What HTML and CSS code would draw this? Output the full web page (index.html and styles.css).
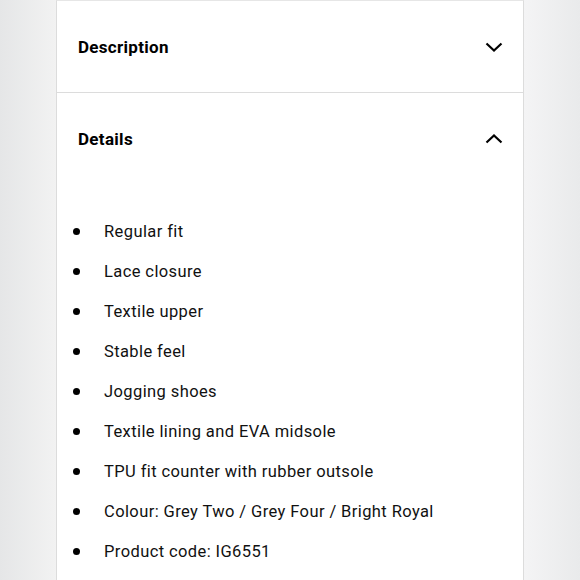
FILE: index.html
```html
<!DOCTYPE html>
<html lang="en">

<head>
    <meta charset="UTF-8">
    <meta name="viewport" content="width=device-width, initial-scale=1.0">
    <title>Product Details</title>
    <link rel="stylesheet" href="styles.css">
</head>

<body>
    <div class="page">
        <div class="side side-left"></div>

        <!-- Accordion panel -->
        <section class="panel">
            <div class="acc-item">
                <button class="acc-head">
                    <span>Description</span>
                    <svg class="chevron" width="18" height="10" viewBox="0 0 18 10">
                        <path d="M1.5 1.5 L9 8.5 L16.5 1.5" fill="none" stroke="#000" stroke-width="2.2" />
                    </svg>
                </button>
            </div>

            <div class="acc-item open">
                <button class="acc-head">
                    <span>Details</span>
                    <svg class="chevron" width="18" height="10" viewBox="0 0 18 10">
                        <path d="M1.5 8.5 L9 1.5 L16.5 8.5" fill="none" stroke="#000" stroke-width="2.2" />
                    </svg>
                </button>
                <ul class="details-list">
                    <li>Regular fit</li>
                    <li>Lace closure</li>
                    <li>Textile upper</li>
                    <li>Stable feel</li>
                    <li>Jogging shoes</li>
                    <li>Textile lining and EVA midsole</li>
                    <li>TPU fit counter with rubber outsole</li>
                    <li>Colour: Grey Two / Grey Four / Bright Royal</li>
                    <li>Product code: IG6551</li>
                </ul>
            </div>
        </section>

        <div class="side side-right"></div>
    </div>
</body>

</html>
```

FILE: styles.css
```css
/* Product details accordion */
body {
    margin: 0;
    font-family: Roboto, "Liberation Sans", sans-serif;
    color: #000;
    overflow: hidden;
}

.page {
    display: flex;
    height: 580px;
}

.side {
    flex: 1;
}

.side-left {
    background: linear-gradient(to right, #e5e6e7, #f2f2f2);
}

.side-right {
    background: linear-gradient(to right, #f4f4f5, #e9eaeb);
}

.panel {
    width: 466px;
    background: white;
    border-left: 1px solid #dcdcdc;
    border-right: 1px solid #dcdcdc;
    border-top: 1px solid #e6e6e6;
}

.acc-item {
    border-bottom: 1px solid #dcdcdc;
}

.acc-item.open {
    border-bottom: none;
}

.acc-head {
    display: flex;
    justify-content: space-between;
    align-items: center;
    width: 100%;
    height: 91px;
    padding: 0 20px 0 21px;
    border: none;
    background: none;
    font-family: inherit;
    font-size: 17px;
    font-weight: bold;
    letter-spacing: 0.3px;
    color: #000;
    text-align: left;
}

.acc-item.open .acc-head {
    height: 92px;
}

.details-list {
    list-style: none;
    margin: 0;
    padding: 26px 0 0 16px;
}

.details-list li {
    display: flex;
    align-items: center;
    height: 40px;
    font-size: 16.5px;
    letter-spacing: 0.4px;
    color: #111;
}

.details-list li::before {
    content: "";
    width: 7px;
    height: 7px;
    border-radius: 50%;
    background: #000;
    margin-right: 24px;
}
```
